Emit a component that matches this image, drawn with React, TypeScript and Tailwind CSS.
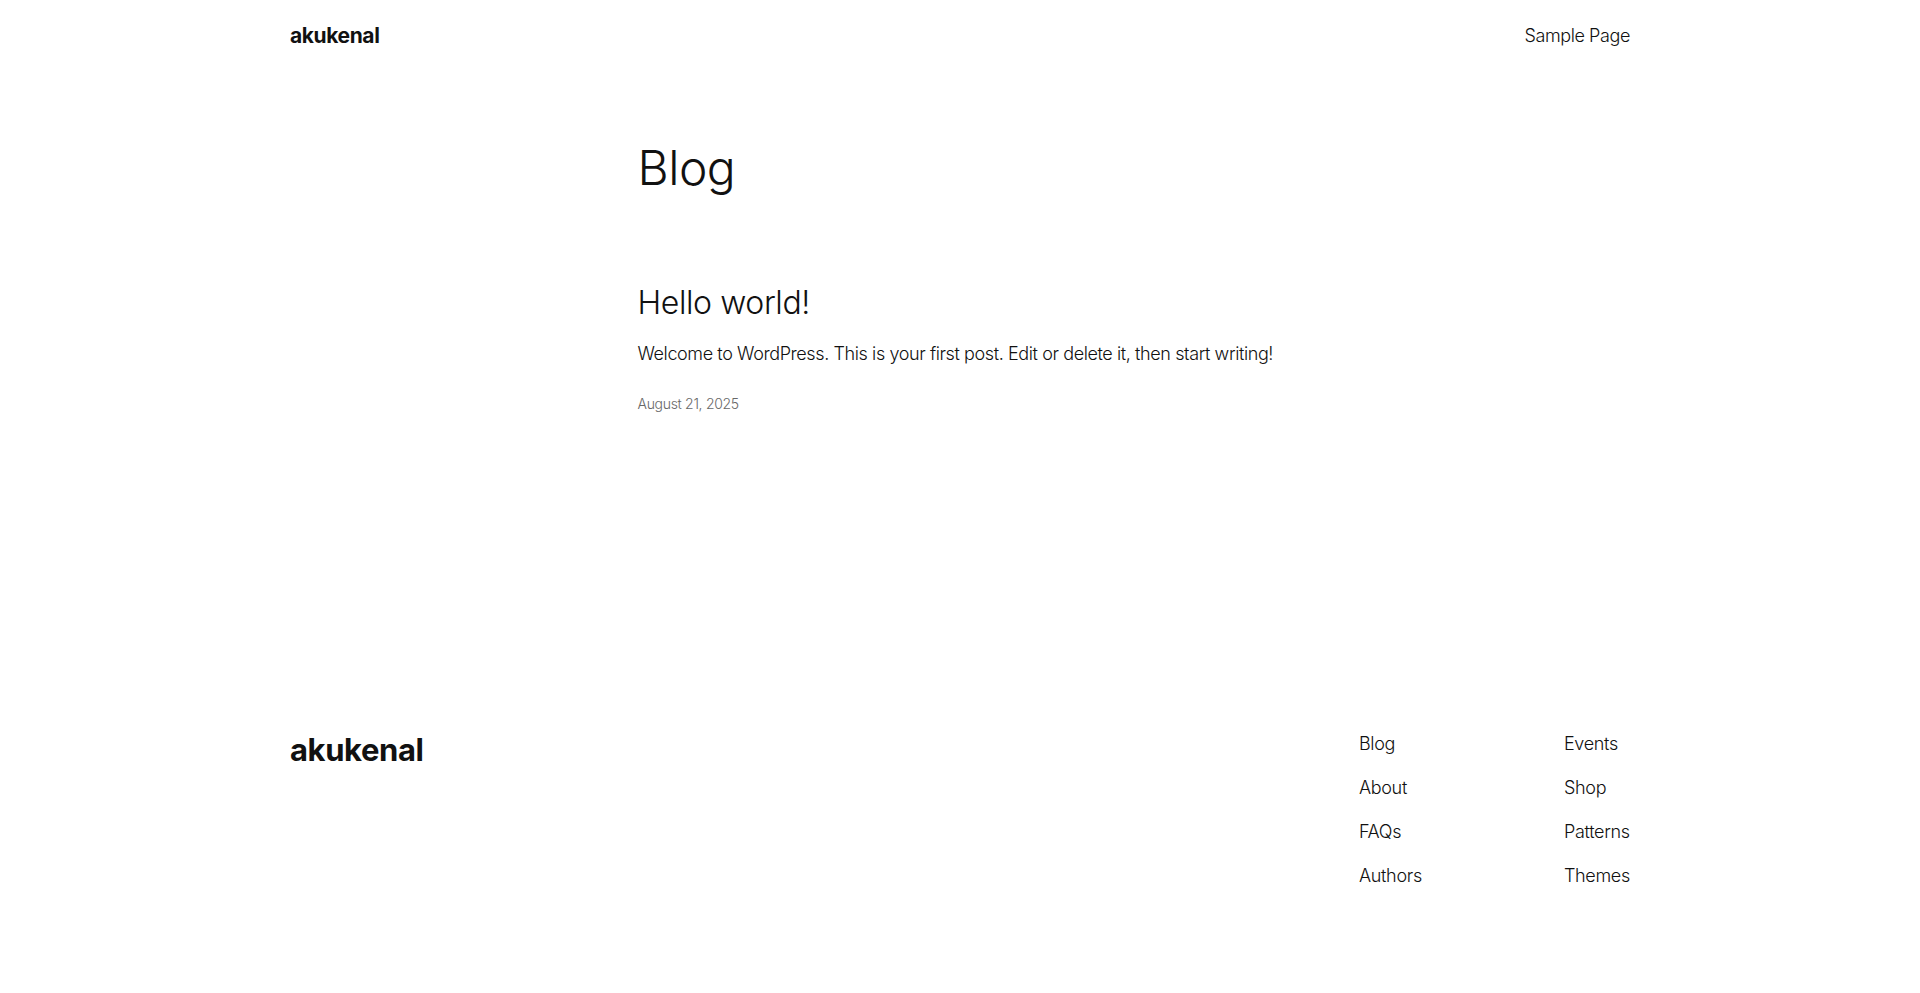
const footerLinks = [
  ['Blog', 'About', 'FAQs', 'Authors'],
  ['Events', 'Shop', 'Patterns', 'Themes'],
];

export default function App() {
  return (
    <div className="min-h-screen bg-white text-[#111111] font-['Inter','Noto_Sans',sans-serif] font-light">
      {/* Header */}
      <header className="mx-auto flex h-[70px] max-w-[1340px] items-center justify-between">
        <a href="#" className="text-[21px] font-bold tracking-[-0.4px] leading-none">
          akukenal
        </a>
        <nav>
          <a href="#" className="text-[18px] tracking-[-0.4px]">
            Sample Page
          </a>
        </nav>
      </header>

      {/* Main */}
      <main className="mx-auto mt-[69px] max-w-[645px]">
        <h1 className="text-[48px] leading-[1.2] font-light tracking-[-0.5px]">Blog</h1>

        <article className="mt-[87px]">
          <h2 className="text-[32px] leading-[1.2] font-light tracking-[-0.4px]">
            <a href="#">Hello world!</a>
          </h2>
          <p className="mt-[19px] whitespace-nowrap text-[18px] leading-[1.4] tracking-[-0.4px]">
            Welcome to WordPress. This is your first post. Edit or delete it, then start writing!
          </p>
          <time className="mt-[28px] block text-[14px] leading-[1.4] tracking-[-0.3px] text-[#686868]">
            August 21, 2025
          </time>
        </article>
      </main>

      {/* Footer */}
      <footer className="mx-auto mt-[317px] flex max-w-[1340px] items-start justify-between pb-[50px]">
        <a href="#" className="text-[31px] leading-[1.2] font-bold tracking-[-0.4px]">
          akukenal
        </a>
        <div className="flex">
          {footerLinks.map((col, i) => (
            <ul key={i} className={`flex flex-col gap-[19px] ${i === 0 ? 'w-[205px]' : ''}`}>
              {col.map((label) => (
                <li key={label}>
                  <a href="#" className="text-[18px] leading-[1.4] tracking-[-0.3px]">
                    {label}
                  </a>
                </li>
              ))}
            </ul>
          ))}
        </div>
      </footer>
    </div>
  );
}
